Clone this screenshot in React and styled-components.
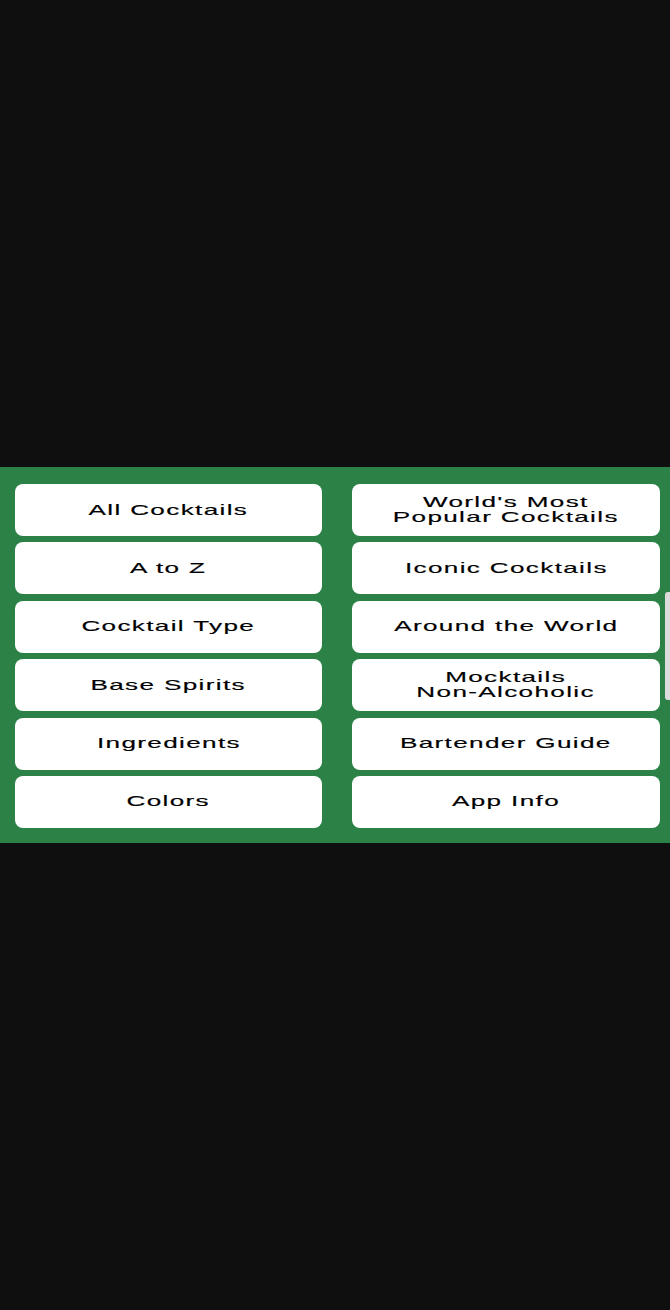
import React from "react";
import styled, { createGlobalStyle } from "styled-components";

const Global = createGlobalStyle`
  html, body { margin: 0; padding: 0; background: #0f0f0f; }
  body { font-family: "Liberation Sans", Arial, sans-serif; }
`;

const Screen = styled.div`
  position: relative;
  width: 670px;
  height: 1310px;
  display: flex;
  flex-direction: column;
  justify-content: center;
  background: #0f0f0f;
  overflow: hidden;
`;

const Panel = styled.div`
  background: #2c8246;
  padding: 17px 10px 15px 15px;
  display: grid;
  grid-template-columns: 307px 308px;
  column-gap: 30px;
  row-gap: 6.4px;
`;

const MenuButton = styled.button`
  height: 52px;
  border: none;
  border-radius: 8px;
  background: #ffffff;
  display: flex;
  align-items: center;
  justify-content: center;
  padding: 0;
  cursor: pointer;
  font-family: "Liberation Sans", Arial, sans-serif;
`;

const Label = styled.span`
  display: block;
  font-size: 14.5px;
  line-height: 15px;
  letter-spacing: 0.75px;
  color: #000000;
  text-align: center;
  white-space: nowrap;
  transform: scaleX(1.8);
  transform-origin: center;
  -webkit-text-stroke: 0.15px #000;
`;

const ScrollThumb = styled.div`
  position: absolute;
  right: 0;
  top: 592px;
  width: 5px;
  height: 108px;
  background: #dcdcdc;
  border-radius: 3px 0 0 3px;
`;

const items = [
  ["All Cocktails"],
  ["World's Most", "Popular Cocktails"],
  ["A to Z"],
  ["Iconic Cocktails"],
  ["Cocktail Type"],
  ["Around the World"],
  ["Base Spirits"],
  ["Mocktails", "Non-Alcoholic"],
  ["Ingredients"],
  ["Bartender Guide"],
  ["Colors"],
  ["App Info"],
];

export default function App() {
  return (
    <>
      <Global />
      <Screen>
        <Panel>
          {items.map((lines) => (
            <MenuButton key={lines.join(" ")}>
              <Label>
                {lines.map((l, i) => (
                  <React.Fragment key={i}>
                    {i > 0 && <br />}
                    {l}
                  </React.Fragment>
                ))}
              </Label>
            </MenuButton>
          ))}
        </Panel>
        <ScrollThumb />
      </Screen>
    </>
  );
}
